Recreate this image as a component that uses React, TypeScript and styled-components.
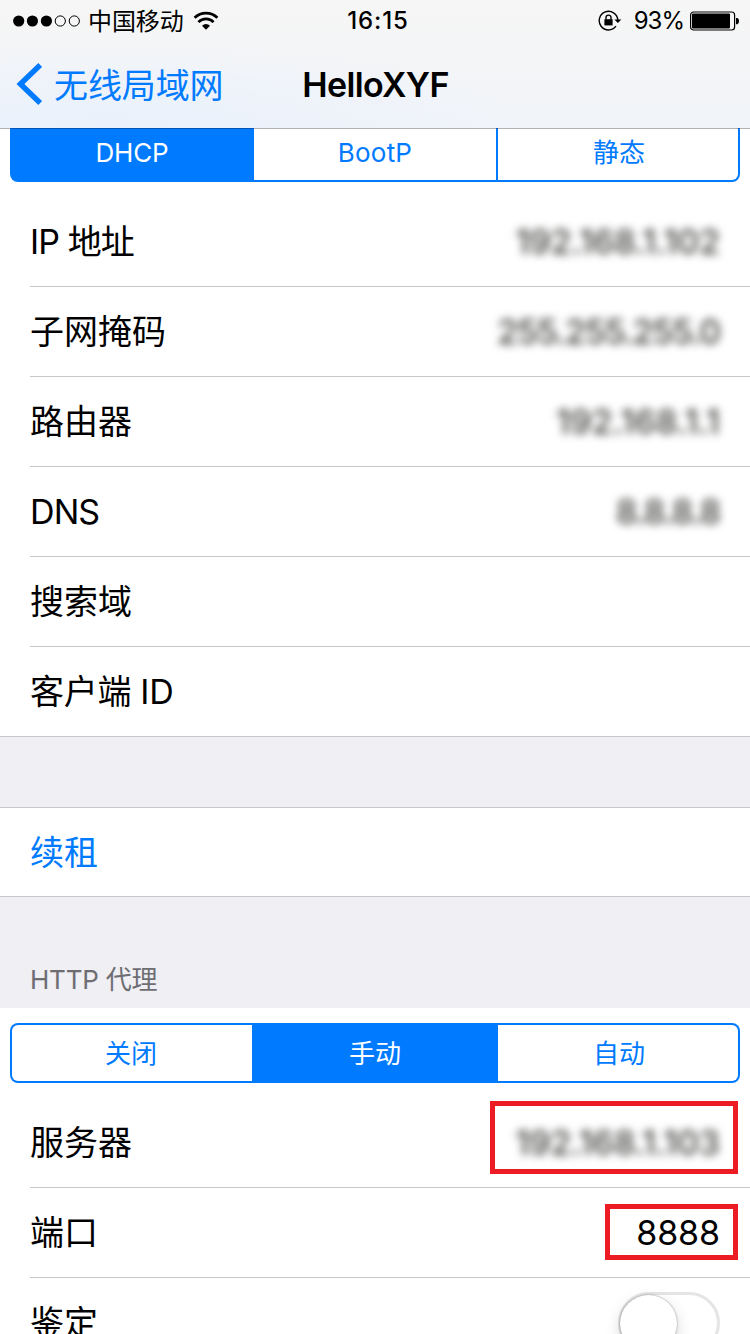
import React from 'react';
import styled, { createGlobalStyle, css } from 'styled-components';

const BLUE = '#007aff';
const LINE = '#c8c7cc';

const GlobalStyle = createGlobalStyle`
  * { box-sizing: border-box; }
  html, body { margin: 0; padding: 0; }
  body {
    width: 750px;
    height: 1334px;
    overflow: hidden;
    background: #efeff4;
    color: #000;
    font-family: Inter, "Noto Sans CJK SC", sans-serif;
    font-weight: 380;
  }
`;

const Screen = styled.div`
  display: flex;
  flex-direction: column;
  width: 750px;
  height: 1334px;
  overflow: hidden;
`;

const Header = styled.header`
  position: relative;
  z-index: 1;
  flex: none;
  height: 128px;
  box-shadow: 0 1px 0 rgba(0, 0, 0, 0.3);
  background:
    radial-gradient(ellipse 420px 90px at 110px 129px, #e9f1fc 0%, rgba(233, 241, 252, 0) 100%),
    linear-gradient(180deg, #f6f6f6 0%, #f4f5f7 50%, #f1f4f9 100%);
`;

const StatusBar = styled.div`
  display: grid;
  grid-template-columns: 1fr auto 1fr;
  align-items: center;
  height: 40px;
  padding: 0 10px 0 12px;
`;

const StatusSide = styled.div<{ $end?: boolean }>`
  display: flex;
  align-items: center;
  justify-content: ${p => (p.$end ? 'flex-end' : 'flex-start')};
  height: 40px;
`;

const StatusText = styled.span<{ $track?: number }>`
  padding-top: 1px;
  font-size: 24px;
  line-height: 40px;
  letter-spacing: ${p => p.$track ?? 0}px;
  white-space: nowrap;
`;

const Clock = styled(StatusText)`
  padding-left: 4px;
  font-weight: 550;
`;

const Carrier = styled(StatusText)`
  padding-top: 2px;
  margin: 0 9px 0 7px;
`;

const Percent = styled(StatusText)`
  margin: 0 6px 0 12px;
`;

const NavBar = styled.nav`
  display: grid;
  grid-template-columns: 1fr auto 1fr;
  align-items: center;
  height: 88px;
  padding: 0 16px;
`;

const Back = styled.div`
  display: flex;
  align-items: center;
  gap: 11px;
  color: ${BLUE};
`;

const BackLabel = styled.span`
  padding-top: 3px;
  font-size: 34px;
  line-height: 44px;
  letter-spacing: -0.1px;
`;

const Title = styled.h1`
  margin: 0;
  padding: 1px 0 0 1px;
  font-size: 34px;
  line-height: 44px;
  font-weight: 560;
  letter-spacing: -0.65px;
`;

const Group = styled.section`
  flex: none;
  background: #fff;
`;

const SegmentWrap = styled.div<{ $clipped?: boolean }>`
  display: flex;
  align-items: flex-end;
  overflow: hidden;
  height: ${p => (p.$clipped ? 69 : 90)}px;
  padding: 0 10px 15px;
`;

const Segments = styled.div<{ $columns: string }>`
  display: grid;
  grid-template-columns: ${p => p.$columns};
  flex: 1;
  height: 60px;
  padding: 2px;
  border-radius: 8px;
  background: ${BLUE};
`;

const Segment = styled.div<{ $active?: boolean; $divided?: boolean; $track?: number; $side?: 'start' | 'end' }>`
  display: flex;
  align-items: center;
  justify-content: center;
  padding: 1px ${p => (p.$side === 'start' ? 2 : 0)}px 0 ${p => (p.$side === 'end' ? 2 : 0)}px;
  font-size: 26px;
  line-height: 54px;
  letter-spacing: ${p => p.$track ?? 0}px;
  color: ${p => (p.$active ? '#fff' : BLUE)};
  background: ${p => (p.$active ? BLUE : '#fff')};
  border-right: ${p => (p.$divided ? `2px solid ${BLUE}` : '0')};
  &:first-child { border-radius: 6px 0 0 6px; }
  &:last-child { border-radius: 0 6px 6px 0; }
`;

const Row = styled.div<{ $full?: boolean; $ruled?: boolean }>`
  display: flex;
  align-items: center;
  justify-content: space-between;
  height: 90px;
  margin-left: ${p => (p.$full ? 0 : 30)}px;
  padding-left: ${p => (p.$full ? 30 : 0)}px;
  padding-right: 12px;
  border-bottom: 1px solid ${LINE};
  ${p => p.$ruled && css`border-top: 1px solid ${LINE};`}
`;

const Label = styled.span<{ $link?: boolean; $track?: number }>`
  padding-top: 1px;
  font-size: 34px;
  line-height: 48px;
  letter-spacing: ${p => p.$track ?? 0}px;
  color: ${p => (p.$link ? BLUE : '#000')};
  white-space: nowrap;
`;

const Value = styled.span<{ $hidden?: boolean; $track?: number }>`
  margin-right: 18px;
  font-size: 34px;
  line-height: 48px;
  letter-spacing: ${p => p.$track ?? 0}px;
  ${p => p.$hidden && css`
    color: #3c3c3a;
    font-weight: 450;
    filter: blur(4.4px);
  `}
`;

const Marked = styled.div<{ $w: number; $h: number; $lift: number }>`
  display: flex;
  align-items: center;
  justify-content: flex-end;
  width: ${p => p.$w}px;
  height: ${p => p.$h}px;
  margin-bottom: ${p => p.$lift * 2}px;
  border: 5px solid #ed1c24;
  ${Value} {
    margin-right: 13px;
    padding-top: ${p => p.$lift * 2}px;
  }
`;

const Gap = styled.div`
  flex: none;
  height: 70px;
`;

const SectionTitle = styled.h2`
  flex: none;
  display: flex;
  align-items: flex-end;
  height: 111px;
  margin: 0;
  padding: 0 30px 8px;
  color: #6d6d72;
  font-size: 26px;
  line-height: 40px;
  font-weight: 380;
  letter-spacing: -0.2px;
`;

const Track = styled.div`
  width: 102px;
  height: 62px;
  margin-right: 18px;
  border: 3px solid #e5e5e5;
  border-radius: 31px;
  background: #fff;
`;

const Knob = styled.div`
  width: 57px;
  height: 57px;
  margin: 0 0 0 -1px;
  border-radius: 50%;
  background: #fff;
  box-shadow: 0 0 2px rgba(0, 0, 0, 0.45), 0 6px 16px rgba(0, 0, 0, 0.16);
`;

const SignalDots = () => (
  <svg width="69" height="14" viewBox="0 0 69 14">
    {[6.7, 20.4, 34.4].map(x => <circle key={x} cx={x} cy="7" r="5.6" />)}
    {[48.3, 62.3].map(x => (
      <circle key={x} cx={x} cy="7" r="5.1" fill="none" stroke="#000" strokeWidth="1" />
    ))}
  </svg>
);

const Wifi = () => (
  <svg width="26" height="20" viewBox="0 0 26 20" fill="none" stroke="#000" strokeWidth="2.7">
    <path d="M1.6 6.7A16.3 16.3 0 0 1 24.4 6.7" />
    <path d="M5.4 11.1A10.8 10.8 0 0 1 20.6 11.1" />
    <path d="M13 18.7L9 14.7A5.7 5.7 0 0 1 17 14.7Z" fill="#000" stroke="none" />
  </svg>
);

const RotationLock = () => (
  <svg width="24" height="22" viewBox="0 0 24 22" fill="none" stroke="#000">
    <path d="M18 16.2A9.3 9.3 0 1 1 19.8 10" strokeWidth="1.4" />
    <path d="M16.4 9.4H23.4L19.9 13Z" fill="#000" stroke="none" />
    <rect x="6.4" y="9.2" width="8.2" height="6.2" fill="#000" stroke="none" />
    <path d="M8 9.4V7.6A2.5 2.5 0 0 1 13 7.6V9.4" strokeWidth="1.4" />
  </svg>
);

const Battery = () => (
  <svg width="50" height="20" viewBox="0 0 50 20">
    <rect x="0.6" y="1" width="44" height="18" rx="3" fill="none" stroke="#000" strokeWidth="1.2" />
    <rect x="2" y="2.6" width="38" height="14.8" rx="1" />
    <path d="M46 7H47.4Q49 7.4 49 10T47.4 13.2H46Z" />
  </svg>
);

const Chevron = () => (
  <svg width="27" height="42" viewBox="0 0 27 42" fill="none" stroke={BLUE} strokeWidth="5.4">
    <path d="M24.2 2L4.4 21L24.2 40" />
  </svg>
);

export default function App() {
  return (
    <Screen>
      <GlobalStyle />
      <Header>
        <StatusBar>
          <StatusSide>
            <SignalDots />
            <Carrier $track={-0.1}>中国移动</Carrier>
            <Wifi />
          </StatusSide>
          <Clock $track={0.9}>16:15</Clock>
          <StatusSide $end>
            <RotationLock />
            <Percent $track={-1}>93%</Percent>
            <Battery />
          </StatusSide>
        </StatusBar>
        <NavBar>
          <Back><Chevron /><BackLabel>无线局域网</BackLabel></Back>
          <Title>HelloXYF</Title>
        </NavBar>
      </Header>

      <Group>
        <SegmentWrap $clipped>
          <Segments $columns="242px 244px 240px">
            <Segment $active $track={-0.2} $side="start">DHCP</Segment>
            <Segment $divided $track={0.2}>BootP</Segment>
            <Segment $side="end">静态</Segment>
          </Segments>
        </SegmentWrap>
        <Row><Label $track={-0.9}>IP 地址</Label><Value $hidden $track={-0.1}>192.168.1.102</Value></Row>
        <Row><Label>子网掩码</Label><Value $hidden $track={-1.2}>255.255.255.0</Value></Row>
        <Row><Label>路由器</Label><Value $hidden $track={0.1}>192.168.1.1</Value></Row>
        <Row><Label $track={-0.9}>DNS</Label><Value $hidden $track={-1.1}>8.8.8.8</Value></Row>
        <Row><Label>搜索域</Label></Row>
        <Row $full><Label $track={-0.3}>客户端 ID</Label></Row>
      </Group>

      <Gap />

      <Group>
        <Row $full $ruled><Label $link>续租</Label></Row>
      </Group>

      <SectionTitle>HTTP 代理</SectionTitle>

      <Group>
        <SegmentWrap>
          <Segments $columns="240px 246px 240px">
            <Segment $side="start">关闭</Segment>
            <Segment $active>手动</Segment>
            <Segment $side="end">自动</Segment>
          </Segments>
        </SegmentWrap>
        <Row>
          <Label>服务器</Label>
          <Marked $w={248} $h={73} $lift={5}><Value $hidden $track={-0.1}>192.168.1.103</Value></Marked>
        </Row>
        <Row>
          <Label>端口</Label>
          <Marked $w={133} $h={56} $lift={1}><Value $track={-0.1}>8888</Value></Marked>
        </Row>
        <Row>
          <Label>鉴定</Label>
          <Track><Knob /></Track>
        </Row>
      </Group>
    </Screen>
  );
}
